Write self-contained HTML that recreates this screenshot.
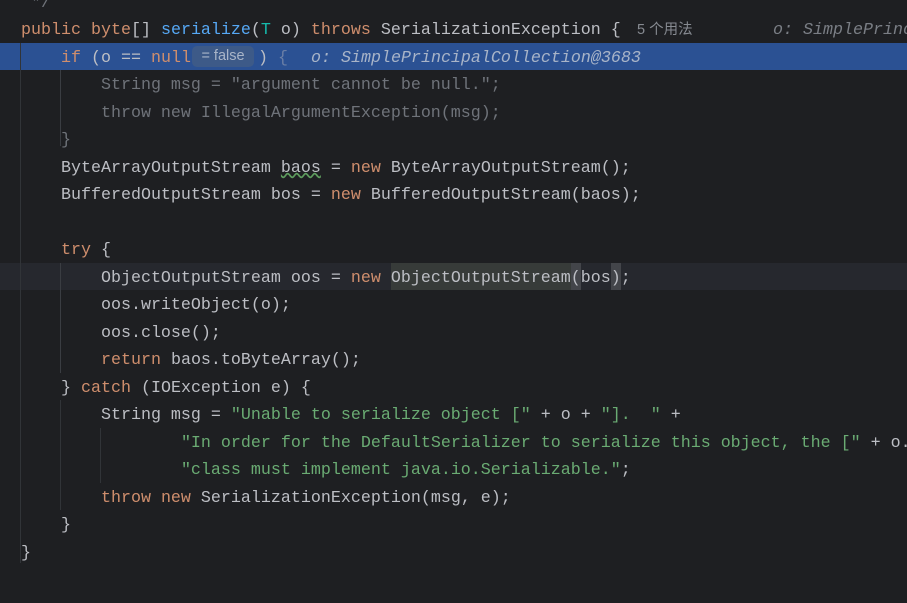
<!DOCTYPE html>
<html><head><meta charset="utf-8"><style>
html,body{margin:0;padding:0;}
body{width:907px;height:601px;background:#1e1f22;overflow:hidden;position:relative;font-family:"Liberation Mono",monospace;font-size:16.67px;color:#bcbec4;}
.w{position:absolute;left:0;top:1.5px;width:907px;height:601px;}
.l{position:absolute;left:21px;height:27.5px;line-height:27.5px;white-space:pre;}
.k{color:#cf8e6d}.m{color:#56a8f5}.s{color:#6aab73}.t{color:#16baac}.d{color:#6f737a}.h{color:#7a7e85;font-style:italic}
.g{position:absolute;width:1px;background:#313438;}
.cn{font-family:"Liberation Sans","Noto Sans CJK SC",sans-serif;font-size:14.5px;color:#868a91;}
</style></head><body>
<div style="position:absolute;left:0;top:43px;width:907px;height:27px;background:#2b5193"></div>
<div style="position:absolute;left:0;top:263px;width:907px;height:27px;background:#26282e"></div>
<div class="g" style="left:20px;top:43px;height:520px"></div>
<div class="g" style="left:60px;top:70px;height:76px;background:#3a3d42"></div>
<div class="g" style="left:60px;top:263px;height:110px;background:#3a3d42"></div>
<div class="g" style="left:60px;top:400px;height:110px"></div>
<div class="g" style="left:100px;top:428px;height:55px"></div>
<div style="position:absolute;left:391px;top:263px;width:180px;height:27px;background:#373b39"></div>
<div style="position:absolute;left:571px;top:263px;width:10px;height:27px;background:#43454a"></div>
<div style="position:absolute;left:611px;top:263px;width:10px;height:27px;background:#43454a"></div>
<div style="position:absolute;left:192px;top:46px;width:62px;height:21px;background:#3d5a88;border-radius:5px;color:#a9b5c8;font-family:'Liberation Sans',sans-serif;font-size:14.5px;line-height:21px;text-align:center">= false</div>
<div class="w">
<div class="l" style="top:-12px"><span class="d"> */</span></div>
<div class="l" style="top:15.5px"><span class="k">public byte</span>[] <span class="m">serialize</span>(<span class="t">T</span> o) <span class="k">throws</span> SerializationException {</div>
<div class="l cn" style="left:637px;top:15.5px">5 个用法</div>
<div class="l h" style="left:773px;top:15.5px">o: SimplePrinc</div>

<div class="l" style="top:43px">    <span class="k">if</span> (o == <span class="k">null</span></div>
<div class="l" style="left:258px;top:43px">) <span style="color:#6b7fa6">{</span></div>
<div class="l h" style="left:311px;top:43px;color:#a8b4c8">o: SimplePrincipalCollection@3683</div>

<div class="l d" style="top:70.5px">        String msg = "argument cannot be null.";</div>
<div class="l d" style="top:98px">        throw new IllegalArgumentException(msg);</div>
<div class="l d" style="top:125.5px">    }</div>
<div class="l" style="top:153px">    ByteArrayOutputStream <span style="text-decoration:underline wavy #5e9c5e">baos</span> = <span class="k">new</span> ByteArrayOutputStream();</div>
<div class="l" style="top:180.5px">    BufferedOutputStream bos = <span class="k">new</span> BufferedOutputStream(baos);</div>
<div class="l" style="top:235.5px">    <span class="k">try</span> {</div>
<div class="l" style="top:263px">        ObjectOutputStream oos = <span class="k">new</span> ObjectOutputStream(bos);</div>
<div class="l" style="top:290.5px">        oos.writeObject(o);</div>
<div class="l" style="top:318px">        oos.close();</div>
<div class="l" style="top:345.5px">        <span class="k">return</span> baos.toByteArray();</div>
<div class="l" style="top:373px">    } <span class="k">catch</span> (IOException e) {</div>
<div class="l" style="top:400.5px">        String msg = <span class="s">"Unable to serialize object ["</span> + o + <span class="s">"].  "</span> +</div>
<div class="l" style="top:428px">                <span class="s">"In order for the DefaultSerializer to serialize this object, the ["</span> + o.</div>
<div class="l" style="top:455.5px">                <span class="s">"class must implement java.io.Serializable."</span>;</div>
<div class="l" style="top:483px">        <span class="k">throw new</span> SerializationException(msg, e);</div>
<div class="l" style="top:510.5px">    }</div>
<div class="l" style="top:538px">}</div>
</div>
</body></html>
